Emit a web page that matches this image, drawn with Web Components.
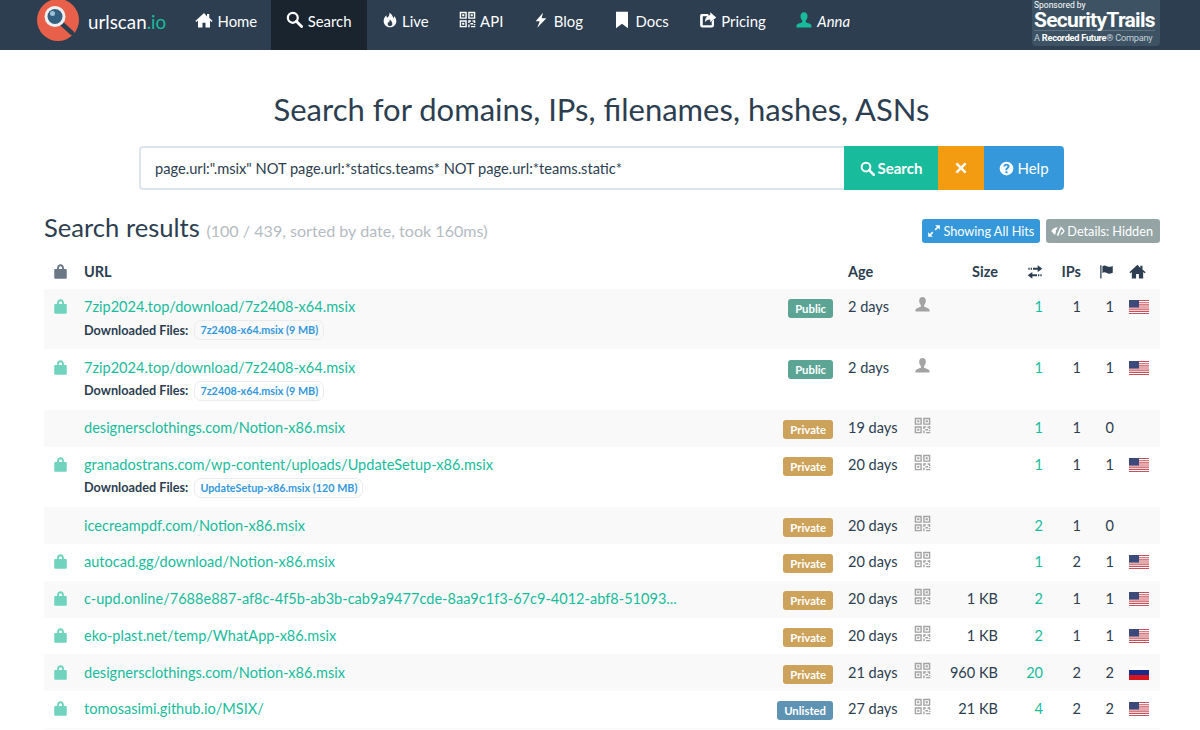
<!DOCTYPE html>
<html lang="en">
<head>
<meta charset="utf-8">
<title>urlscan.io - Search</title>
<style>
  html, body { margin: 0; padding: 0; background: #fff; }
  body { font-family: Lato, "Liberation Sans", sans-serif; color: #2c3e50; font-size: 14.5px; }
  a { color: inherit; text-decoration: none; }
</style>
</head>
<body>
<top-nav>
  <nav-item icon="home" icon-size="18" style="padding-right:14px">Home</nav-item>
  <nav-item icon="search" icon-size="17" active>Search</nav-item>
  <nav-item icon="fire" icon-size="16">Live</nav-item>
  <nav-item icon="qrcode" icon-size="17">API</nav-item>
  <nav-item icon="bolt" icon-size="16">Blog</nav-item>
  <nav-item icon="bookmark" icon-size="18">Docs</nav-item>
  <nav-item icon="share" icon-size="18" style="padding-right:14px">Pricing</nav-item>
  <nav-item icon="user" icon-size="18" icon-color="#18bc9c" italic>Anna</nav-item>
</top-nav>
<search-form title="Search for domains, IPs, filenames, hashes, ASNs" query='page.url:".msix" NOT page.url:*statics.teams* NOT page.url:*teams.static*'></search-form>
<results-panel summary="(100 / 439, sorted by date, took 160ms)">
  <result-row visibility="Public" age="2 days" scan="user" redirects="1" ips="1" flags="1" flag="us" locked>
    7zip2024.top/download/7z2408-x64.msix
    <file-pill slot="files">7z2408-x64.msix (9 MB)</file-pill>
  </result-row>
  <result-row visibility="Public" age="2 days" scan="user" redirects="1" ips="1" flags="1" flag="us" locked>
    7zip2024.top/download/7z2408-x64.msix
    <file-pill slot="files">7z2408-x64.msix (9 MB)</file-pill>
  </result-row>
  <result-row visibility="Private" age="19 days" scan="qrcode" redirects="1" ips="1" flags="0">designersclothings.com/Notion-x86.msix</result-row>
  <result-row visibility="Private" age="20 days" scan="qrcode" redirects="1" ips="1" flags="1" flag="us" locked>
    granadostrans.com/wp-content/uploads/UpdateSetup-x86.msix
    <file-pill slot="files">UpdateSetup-x86.msix (120 MB)</file-pill>
  </result-row>
  <result-row visibility="Private" age="20 days" scan="qrcode" redirects="2" ips="1" flags="0">icecreampdf.com/Notion-x86.msix</result-row>
  <result-row visibility="Private" age="20 days" scan="qrcode" redirects="1" ips="2" flags="1" flag="us" locked>autocad.gg/download/Notion-x86.msix</result-row>
  <result-row visibility="Private" age="20 days" scan="qrcode" size="1 KB" redirects="2" ips="1" flags="1" flag="us" locked>c-upd.online/7688e887-af8c-4f5b-ab3b-cab9a9477cde-8aa9c1f3-67c9-4012-abf8-51093...</result-row>
  <result-row visibility="Private" age="20 days" scan="qrcode" size="1 KB" redirects="2" ips="1" flags="1" flag="us" locked>eko-plast.net/temp/WhatApp-x86.msix</result-row>
  <result-row visibility="Private" age="21 days" scan="qrcode" size="960 KB" redirects="20" ips="2" flags="2" flag="ru" locked>designersclothings.com/Notion-x86.msix</result-row>
  <result-row visibility="Unlisted" age="27 days" scan="qrcode" size="21 KB" redirects="4" ips="2" flags="2" flag="us" locked>tomosasimi.github.io/MSIX/</result-row>
</results-panel>

<script>
const ICONS = {
  home: `<path d="M12 2.500 .5 13.200l1.400 1.300L4 12.600V22h6v-6.500h4V22h6v-9.400l2.100 1.900 1.400-1.300-4.500-4.200V4h-3v3.200z"/>`,
  search: `<circle cx="9.600" cy="9.600" r="7" fill="none" stroke="currentColor" stroke-width="3.200"/><path d="M14.600 14.600 22 22" stroke="currentColor" stroke-width="4" stroke-linecap="round"/>`,
  fire: `<path fill-rule="evenodd" d="M11 1c1 3.500-1 5.200-3 7.500C6.800 7.800 6.500 6.500 6.700 5 3.800 7.500 2.500 10.500 2.500 14c0 5 4 9 9.500 9s9.500-4 9.500-9c0-3.500-1.500-6-3.500-8 .2 1.500-.3 2.800-1.200 3.500C16.500 6 14.500 3 11 1zM12 11c.5 2 3.500 3.200 3.500 6.500 0 2.200-1.500 3.700-3.500 3.700s-3.500-1.500-3.500-3.700c0-1.200.5-2.200 1.200-3 .1.800.5 1.300 1 1.500C11 14.500 11.200 12.800 12 11z"/>`,
  qrcode: `<path fill-rule="evenodd" d="M1 1h10v10H1zM3 3v6h6V3zM13 1h10v10H13zM15 3v6h6V3zM1 13h10v10H1zM3 15v6h6v-6z"/><path d="M4.500 4.500h3v3h-3zM16.500 4.500h3v3h-3zM4.500 16.500h3v3h-3zM13 13h4v2h-2v2h-2zM19 13h4v4h-2v-2h-2zM16 17h4v2h-4zM13 19h2v4h-2zM17 21h6v2h-6zM21 18.500h2V20h-2z"/>`,
  bolt: `<path d="M15 1 4 14h6l-3.500 9.500L20 9.500h-7z"/>`,
  bookmark: `<path d="M4 1h16v22l-8-6-8 6z"/>`,
  share: `<path d="M3.500 4h9v3H5v12h12v-5l3-3v8a3 3 0 0 1-3 3H4.500a3 3 0 0 1-3-3V6.500A2.500 2.500 0 0 1 3.500 4z"/><path d="M15 1.500 23 8.500 15 15v-3.800c-3.500 0-5.500 1-7 3.800 0-5.500 2.500-9 7-9.700z"/>`,
  user: `<path d="M12 1.500c3 0 4.700 2.300 4.700 5.300 0 2.500-1 4.800-2.400 6v2.200c2.500 1.200 7.700 2 7.700 5V22H2v-2c0-3 5.200-3.800 7.700-5v-2.200c-1.400-1.200-2.400-3.500-2.400-6 0-3 1.700-5.300 4.700-5.300z"/>`,
  remove: `<path d="M5.500 2.500 12 9l6.500-6.500 3 3L15 12l6.500 6.500-3 3L12 15l-6.500 6.500-3-3L9 12 2.500 5.500z"/>`,
  question: `<path fill-rule="evenodd" d="M12 1a11 11 0 1 1 0 22 11 11 0 0 1 0-22zM10.300 16.500v3h3.300v-3zM12 4.500c-2.700 0-4.800 1.300-5 4.300h3.200c.1-1 .7-1.500 1.700-1.500s1.600.5 1.600 1.300c0 1.800-3.500 2-3.500 5.700v.6h3.200v-.4c0-2.300 3.700-2.400 3.700-6 0-2.500-2-4-4.900-4z"/>`,
  resize: `<path d="M14 2h8v8l-3-3-4 4-2-2 4-4zM10 22H2v-8l3 3 4-4 2 2-4 4z"/>`,
  eyeoff: `<path fill-rule="evenodd" d="M15 3.800 17.500 5C20 6.500 22 9 23.500 12c-1.500 3-4 5.800-7.500 7.300l2-4.300c1.200-.9 2.200-1.900 3-3-.9-1.400-2-2.600-3.300-3.500zM11.500 5.500 9.800 9.300C8.800 10 8.200 11 8.200 12.200c0 .7.200 1.300.5 1.800l-2 4.300C4.200 16.800 2 14.500.5 12 3 8 7 5.500 11.500 5.500zM12.500 20.500l-2.700-1.200 5.700-13 2.400 1z"/>`,
  lock: `<path fill-rule="evenodd" d="M6.500 8V6.500C6.500 3 8.800.5 12 .5s5.500 2.500 5.500 6V8h3A1.500 1.500 0 0 1 22 9.500V22a1.500 1.500 0 0 1-1.500 1.500h-17A1.500 1.500 0 0 1 2 22V9.500A1.500 1.500 0 0 1 3.500 8zM9.500 8h5V6.500c0-1.700-1-3-2.500-3s-2.500 1.300-2.500 3z"/>`,
  transfer: `<path d="M16 2l7 5-7 5V8.500H9v-3h7zM8 12v3.500h7v3H8V22l-7-5zM2 5.500h2v3H2zM5.500 5.500h2v3h-2zM16.500 15.500h2v3h-2zM20 15.500h2v3h-2z"/>`,
  flag: `<path d="M2 2h2v21H2zM5.500 3.500c2-1.500 4.500-1.500 7 0s5 1.300 9.500-.5v11c-4.500 2-7 2-9.500.5s-5-1.500-7 0z"/>`
};

class UiIcon extends HTMLElement {
  connectedCallback() {
    const size = this.getAttribute("size") || 16;
    this.attachShadow({ mode: "open" }).innerHTML = `
      <style>
        :host { display: inline-flex; flex: none; }
        svg { display: block; fill: currentColor; }
      </style>
      <svg width="${size}" height="${size}" viewBox="0 0 24 24">${ICONS[this.getAttribute("name")] || ""}</svg>`;
  }
}

class TopNav extends HTMLElement {
  constructor() {
    super();
    this.attachShadow({ mode: "open" }).innerHTML = `
      <style>
        :host { display: flex; height: 50px; background: #2c3e50; color: #fff; padding-left: 37px; position: relative; overflow: hidden; }
        .brand { display: flex; align-items: center; gap: 9px; width: 143px; font-size: 18.800px; height: 42px; }
        .brand svg { flex: none; margin-top: -2px; }
        .brand span span { color: #18bc9c; }
        .items { display: flex; }
        .sponsor { position: absolute; left: 1032px; top: 0; width: 128px; height: 46px; box-sizing: border-box; padding: 1px 0 0 2px; background: #3d5364; border-radius: 0 0 4px 4px; font-family: Roboto, sans-serif; line-height: 1; white-space: nowrap; }
        .small { font-size: 8.500px; display: block; height: 9px; }
        .big { font-size: 21px; font-weight: 700; letter-spacing: -.7px; display: block; height: 20px; }
        .co { font-size: 9.200px; color: #c5d0d8; display: block; letter-spacing: -.25px; padding-top: 2px; border-top: 1px solid #5d7283; width: 121px; }
        .co b { color: #fff; font-weight: 700; }
      </style>
      <a class="brand">
        <svg width="42" height="42" viewBox="0 0 42 42">
          <circle cx="21" cy="21" r="21" fill="#e8604a"/>
          <path d="M24 24 35 34" stroke="#2c3e50" stroke-width="4.500" stroke-linecap="round"/>
          <circle cx="18" cy="17.500" r="10.500" fill="#ecf0f1"/>
          <circle cx="18" cy="17.500" r="7.500" fill="#34607f"/>
          <circle cx="15.500" cy="14.500" r="2.500" fill="#9ec2d6"/>
        </svg>
        <span>urlscan<span>.io</span></span>
      </a>
      <div class="items"><slot></slot></div>
      <div class="sponsor">
        <span class="small">Sponsored by</span>
        <span class="big">SecurityTrails</span>
        <span class="co">A <b>Recorded Future</b>&reg; Company</span>
      </div>`;
  }
}

class NavItem extends HTMLElement {
  connectedCallback() {
    const color = this.getAttribute("icon-color") || "#fff";
    this.attachShadow({ mode: "open" }).innerHTML = `
      <style>
        :host { display: flex; align-items: center; gap: 4.500px; height: 50px; padding: 0 15px 8px; font-size: 14.900px; color: #fff; box-sizing: border-box; }
        :host([active]) { background: #1a242f; }
        :host([italic]) { font-style: italic; }
        ui-icon { color: ${color}; margin-top: -3px; }
      </style>
      <ui-icon name="${this.getAttribute("icon")}" size="${this.getAttribute("icon-size")}"></ui-icon><slot></slot>`;
  }
}

class SearchForm extends HTMLElement {
  connectedCallback() {
    this.attachShadow({ mode: "open" }).innerHTML = `
      <style>
        :host { display: flex; flex-direction: column; align-items: center; padding-left: 3px; }
        h1 { font-size: 31px; font-weight: 400; margin: 40px 0 0; line-height: 39px; height: 56px; }
        form { display: flex; width: 925px; height: 44px; margin: 0; font-size: 14.650px; }
        .q { flex: 1; border: 2px solid #dce4ec; border-right: 0; border-radius: 4px 0 0 4px; padding: 0 14px; display: flex; align-items: center; box-sizing: border-box; white-space: nowrap; }
        .btn { display: flex; align-items: center; justify-content: center; gap: 3px; color: #fff; font-size: 15px; height: 100%; box-sizing: border-box; }
        .s { width: 94px; background: #18bc9c; font-weight: 700; }
        .x { width: 46px; background: #f39c12; }
        .h { width: 80px; background: #3498db; border-radius: 0 4px 4px 0; }
      </style>
      <h1>${this.getAttribute("title")}</h1>
      <form>
        <div class="q">${this.getAttribute("query").replace(/"/g, "&quot;")}</div>
        <div class="btn s"><ui-icon name="search" size="15"></ui-icon>Search</div>
        <div class="btn x"><ui-icon name="remove" size="14"></ui-icon></div>
        <div class="btn h"><ui-icon name="question" size="15"></ui-icon>Help</div>
      </form>`;
  }
}

class ResultsPanel extends HTMLElement {
  connectedCallback() {
    this.attachShadow({ mode: "open" }).innerHTML = `
      <style>
        :host { display: block; margin: 21px 40px 0 44px; }
        .head { display: flex; align-items: center; height: 38px; }
        h2 { font-size: 25.600px; font-weight: 400; margin: -2px 0 0; flex: 1; line-height: 38px; white-space: nowrap; }
        h2 small { font-size: 16.100px; color: #b4bcc2; }
        .tag { display: flex; align-items: center; gap: 2px; height: 24px; padding: 0 6px 0 5px; border-radius: 3px; color: #fff; font-size: 12.700px; margin: 2px 0 0 6px; box-sizing: border-box; }
        .blue { background: #3498db; }
        .grey { background: #95a5a6; padding-right: 7px; }
        .cols { display: grid; grid-template-columns: 40px 1fr 81px 30px 54px 45px 38px 33px 46px; height: 29px; align-items: center; font-weight: 700; font-size: 14.500px; margin: 8px 0 3px; }
        .cols > * { text-align: right; }
        .age { margin-left: 15px; text-align: left !important; }
        .url { text-align: left !important; }
        .lock { color: #6b7785; margin-left: 9px; justify-self: start; }
        .ic { justify-self: end; }
        ::slotted(result-row:nth-child(odd)) { background: #f9f9f9; }
        .end { height: 1px; background: #f9f9f9; }
      </style>
      <div class="head">
        <h2>Search results <small>${this.getAttribute("summary")}</small></h2>
        <div class="tag blue"><ui-icon name="resize" size="14"></ui-icon>Showing All Hits</div>
        <div class="tag grey"><ui-icon name="eyeoff" size="14"></ui-icon>Details: Hidden</div>
      </div>
      <div class="cols">
        <ui-icon class="lock" name="lock" size="15"></ui-icon>
        <div class="url">URL</div>
        <div class="age">Age</div>
        <div></div>
        <div>Size</div>
        <ui-icon class="ic" name="transfer" size="16"></ui-icon>
        <div>IPs</div>
        <ui-icon class="ic" name="flag" size="15"></ui-icon>
        <ui-icon class="ic" name="home" size="17" style="margin-right:14px"></ui-icon>
      </div>
      <slot></slot>
      <div class="end"></div>`;
  }
}

const BADGES = { Public: "#5ca595", Private: "#cda25a", Unlisted: "#5f93b4" };

const FLAGS = {
  us: `<rect width="20" height="14" fill="#fff"/><path d="M0 0h20v1.100H0zM0 2.200h20v1.100H0zM0 4.300h20v1.100H0zM0 6.500h20v1.100H0zM0 8.600h20v1.100H0zM0 10.800h20v1.100H0zM0 12.900h20V14H0z" fill="#c8505a"/><rect width="10" height="7.500" fill="#3c4a7a"/>`,
  ru: `<rect width="20" height="14" fill="#fff"/><rect y="4" width="20" height="5" fill="#1a2a8a"/><rect y="9" width="20" height="5" fill="#d8141e"/>`
};

class ResultRow extends HTMLElement {
  connectedCallback() {
    const a = (n) => this.getAttribute(n) || "";
    const vis = a("visibility");
    this.attachShadow({ mode: "open" }).innerHTML = `
      <style>
        :host { display: grid; grid-template-columns: 40px 1fr 81px 30px 54px 45px 38px 33px 46px; padding: 8.400px 0 7.600px; line-height: 20.800px; font-size: 14.550px; color: #2c3e50; }
        .lock { color: #6fd3bd; margin: 2px 0 0 9px; align-self: start; }
        .main { min-width: 0; display: flex; justify-content: space-between; }
        .url { color: #18bc9c; white-space: nowrap; }
        .files { display: none; align-items: center; gap: 6px; font-size: 12.700px; font-weight: 700; height: 23.700px; white-space: nowrap; }
        :host([has-files]) .files { display: flex; }
        .badge { flex: none; align-self: flex-start; height: 19px; line-height: 19px; margin: 2px 0 -2px; padding: 0 7px; border-radius: 3px; color: #fff; font-size: 11.300px; font-weight: 700; background: ${BADGES[vis]}; }
        .age { margin-left: 15px; white-space: nowrap; }
        .scan { color: #a3a3a3; align-self: start; margin-top: -1px; }
        .num { text-align: right; white-space: nowrap; }
        .link { color: #18bc9c; }
        .flag { margin: 3px 0 0 15px; height: 14px; }
        .flag svg { display: block; }
      </style>
      ${this.hasAttribute("locked") ? `<ui-icon class="lock" name="lock" size="15"></ui-icon>` : `<span></span>`}
      <div class="main">
        <div>
          <div class="url"><slot></slot></div>
          <div class="files">Downloaded Files: <slot name="files"></slot></div>
        </div>
        <div class="badge">${vis}</div>
      </div>
      <div class="age">${a("age")}</div>
      <ui-icon class="scan" name="${a("scan")}" size="17"></ui-icon>
      <div class="num">${a("size")}</div>
      <div class="num link">${a("redirects")}</div>
      <div class="num">${a("ips")}</div>
      <div class="num">${a("flags")}</div>
      <div class="flag">${FLAGS[a("flag")] ? `<svg width="20" height="14" viewBox="0 0 20 14">${FLAGS[a("flag")]}</svg>` : ""}</div>`;
    if (this.querySelector("[slot=files]")) this.setAttribute("has-files", "");
  }
}

class FilePill extends HTMLElement {
  constructor() {
    super();
    this.attachShadow({ mode: "open" }).innerHTML = `
      <style>
        :host { display: inline-block; border: 1px solid #e9edf0; border-radius: 7px; padding: 0 5px; height: 20px; line-height: 18px; font-size: 10.800px; font-weight: 700; color: #3498db; box-sizing: border-box; }
      </style>
      <slot></slot>`;
  }
}

customElements.define("ui-icon", UiIcon);
customElements.define("top-nav", TopNav);
customElements.define("nav-item", NavItem);
customElements.define("search-form", SearchForm);
customElements.define("results-panel", ResultsPanel);
customElements.define("result-row", ResultRow);
customElements.define("file-pill", FilePill);
</script>
</body>
</html>
